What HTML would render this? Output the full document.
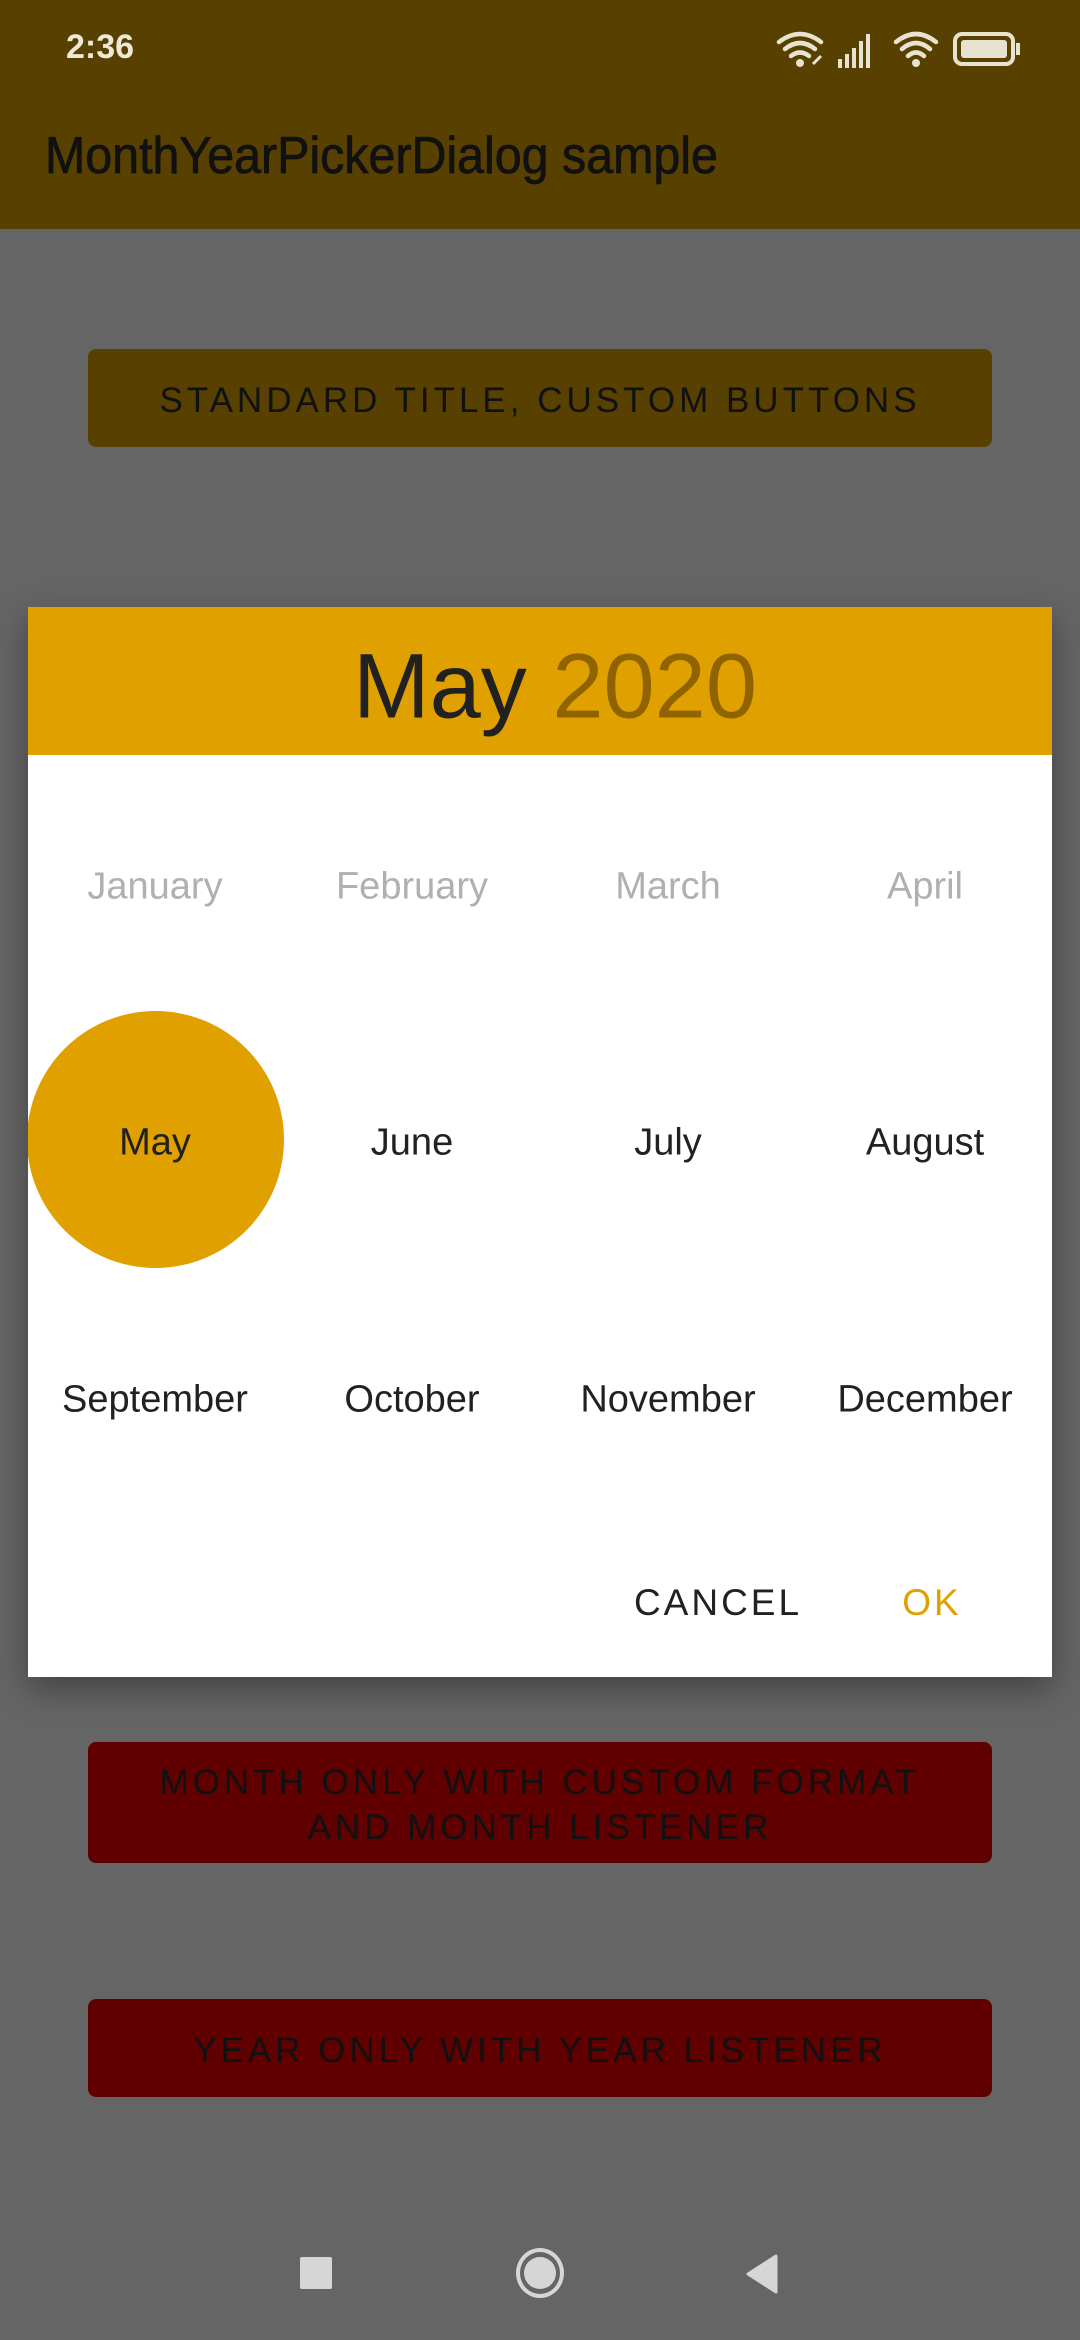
<!DOCTYPE html>
<html><head><meta charset="utf-8"><style>
*{margin:0;padding:0;box-sizing:border-box}
body{width:1080px;height:2340px;background:#656565;position:relative;overflow:hidden;font-family:"Liberation Sans",sans-serif}
.abs{position:absolute}
.c{position:absolute;transform:translate(-50%,-50%);white-space:nowrap;text-align:center}
.btn{position:absolute;left:88px;width:904px;border-radius:8px;display:flex;align-items:center;justify-content:center;text-align:center;color:#111;font-size:35px;letter-spacing:4px;line-height:45px;padding-top:4px}
.m{font-size:38px;color:#212121}
.d{color:#b0b0b0}
</style></head><body>
<div class="abs" style="left:0;top:0;width:1080px;height:229px;background:#574000"></div>
<div class="abs" style="left:66px;top:28px;font-size:34px;font-weight:bold;color:#eee8d8">2:36</div>
<svg class="abs" style="left:775px;top:28px" width="250" height="42" viewBox="0 0 250 42">
<g fill="none" stroke="#e8e2d0" stroke-width="4.5" stroke-linecap="round">
<path d="M4 14 Q25 -2 46 14"/><path d="M10 21 Q25 9 40 21"/><path d="M16 28 Q25 21 34 28"/>
<path d="M121 14 Q141 -2 161 14"/><path d="M127 21 Q141 9 155 21"/><path d="M133 28 Q141 21 149 28"/>
</g>
<circle cx="25" cy="35" r="4" fill="#e8e2d0"/><circle cx="141" cy="35" r="4" fill="#e8e2d0"/>
<path d="M38 36 l8 -8" stroke="#e8e2d0" stroke-width="3"/>
<g fill="#e8e2d0"><rect x="63" y="31" width="4" height="9"/><rect x="70" y="26" width="4" height="14"/><rect x="77" y="20" width="4" height="20"/><rect x="84" y="13" width="4" height="27"/><rect x="91" y="6" width="4" height="34"/></g>
<rect x="180" y="6" width="58" height="30" rx="7" fill="none" stroke="#e8e2d0" stroke-width="4"/>
<rect x="186" y="12" width="46" height="18" rx="3" fill="#e8e2d0"/>
<rect x="241" y="15" width="4" height="12" fill="#e8e2d0"/>
</svg>
<div class="abs" style="left:45px;top:126px;font-size:52px;color:#111;transform:scaleX(0.93);transform-origin:left;-webkit-text-stroke:0.8px #111">MonthYearPickerDialog sample</div>
<div class="btn" style="top:349px;height:98px;background:#574000">STANDARD TITLE, CUSTOM BUTTONS</div>
<div class="btn" style="top:1742px;height:121px;background:#600000">MONTH ONLY WITH CUSTOM FORMAT<br>AND MONTH LISTENER</div>
<div class="btn" style="top:1999px;height:98px;background:#600000">YEAR ONLY WITH YEAR LISTENER</div>

<div class="abs" style="left:28px;top:607px;width:1024px;height:1070px;background:#fff;box-shadow:0 12px 30px rgba(0,0,0,0.35);overflow:hidden">
<div class="abs" style="left:0;top:0;width:1024px;height:148px;background:#e0a000"></div>
<div class="c" style="left:527px;top:80px;font-size:92px;color:#212121">May <span style="color:#8f6400">2020</span></div>
<div class="abs" style="left:-1px;top:404px;width:257px;height:257px;border-radius:50%;background:#e0a000"></div>
<div class="c m d" style="left:127px;top:280px">January</div>
<div class="c m d" style="left:384px;top:280px">February</div>
<div class="c m d" style="left:640px;top:280px">March</div>
<div class="c m d" style="left:897px;top:280px">April</div>
<div class="c m" style="left:127px;top:536px">May</div>
<div class="c m" style="left:384px;top:536px">June</div>
<div class="c m" style="left:640px;top:536px">July</div>
<div class="c m" style="left:897px;top:536px">August</div>
<div class="c m" style="left:127px;top:793px">September</div>
<div class="c m" style="left:384px;top:793px">October</div>
<div class="c m" style="left:640px;top:793px">November</div>
<div class="c m" style="left:897px;top:793px">December</div>
<div class="c" style="left:690px;top:996px;font-size:37px;letter-spacing:3px;color:#212121">CANCEL</div>
<div class="c" style="left:904px;top:996px;font-size:37px;letter-spacing:3px;color:#e0a000">OK</div>
</div>

<div class="abs" style="left:300px;top:2257px;width:32px;height:32px;background:#d6d6d6;border-radius:2px"></div>
<div class="abs" style="left:516px;top:2248px;width:48px;height:50px;border-radius:50%;border:4px solid #d6d6d6"></div>
<div class="abs" style="left:524px;top:2257px;width:32px;height:32px;border-radius:50%;background:#d6d6d6"></div>
<svg class="abs" style="left:744px;top:2254px" width="34" height="40"><path d="M32 2 L32 38 L4 20 Z" fill="#d6d6d6" stroke="#d6d6d6" stroke-width="3" stroke-linejoin="round"/></svg>
</body></html>
